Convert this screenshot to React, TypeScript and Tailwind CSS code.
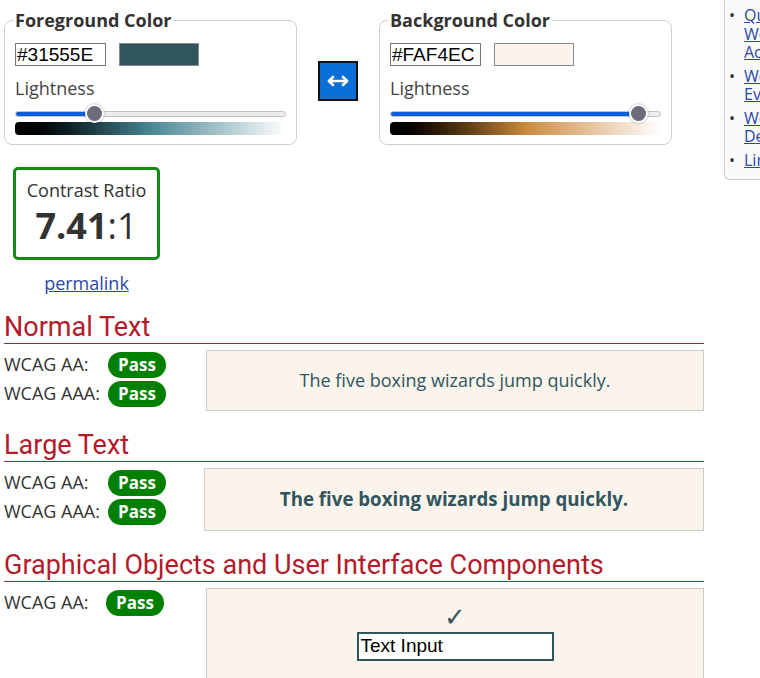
import React from "react";

const body = { fontFamily: '"Open Sans", "Noto Sans", sans-serif' };
const head = { fontFamily: 'Roboto, "Open Sans", sans-serif' };
const mono = { fontFamily: '"Liberation Sans", Arial, sans-serif' };

function Pass() {
  return (
    <span className="flex h-[26px] w-[58px] items-center justify-center rounded-full bg-[#008000] text-[17px] font-bold leading-none text-white">
      Pass
    </span>
  );
}

function ColorBox({
  title,
  hex,
  swatch,
  fill,
  thumb,
  gradient,
  className,
}: {
  title: string;
  hex: string;
  swatch: string;
  fill: string;
  thumb: string;
  gradient: string;
  className?: string;
}) {
  return (
    <fieldset className={"w-[293px] shrink-0 rounded-[8px] border border-[#cfcfcf] px-[10px] pb-[9px] " + className}>
      <legend className="-ml-[2px] px-[2px] text-[18px] font-bold leading-[23px] text-[#333]">{title}</legend>
      <div className="mt-[11px] flex gap-[13px]">
        <div
          style={mono}
          className="flex h-[23px] w-[91px] items-center border border-[#767676] bg-white px-[1px] text-[19px] leading-none text-black"
        >
          {hex}
        </div>
        <div className={"h-[23px] w-[80px] border border-[#8a8a8a] " + swatch} />
      </div>
      <div className="mt-[10px] text-[18px] leading-[24px] text-[#444]">Lightness</div>
      <div className="relative mt-[5px] flex h-[17px] items-center">
        <div className="flex h-[6px] w-full overflow-hidden rounded-full border border-[#c4c4c4] bg-[#ececf0]">
          <div className={"h-full bg-[#0a5fd8] " + fill} />
        </div>
        <div
          className={
            "absolute top-[-1px] h-[19px] w-[19px] rounded-full border-2 border-white bg-[#6b6b7d] shadow-[0_0_2px_rgba(0,0,0,0.4)] " +
            thumb
          }
        />
      </div>
      <div className={"h-[13px] w-full rounded-l-[4px] " + gradient} />
    </fieldset>
  );
}

function Section({
  title,
  children,
  sample,
  boxLeft,
  boxClass,
}: {
  title: string;
  children: React.ReactNode;
  sample: React.ReactNode;
  boxLeft: string;
  boxClass: string;
}) {
  return (
    <section>
      <h2 style={head} className="text-[27px] leading-[32px] text-[#b31b2b]">
        {title}
      </h2>
      <div className="h-px w-full bg-[#a8223c]" />
      <div className="mt-[6px] flex">
        <div className={"shrink-0 " + boxLeft}>{children}</div>
        <div className={"flex-1 border border-[#cccccc] bg-[#FAF4EC] text-[#31555E] " + boxClass}>{sample}</div>
      </div>
    </section>
  );
}

function Row({ label, pad }: { label: string; pad: string }) {
  return (
    <div className="flex h-[29px] items-center">
      <span className={"text-[18px] text-[#333] " + pad}>{label}</span>
      <Pass />
    </div>
  );
}

const links: string[][] = [
  ["Qu", "We", "Ac"],
  ["We", "Ev"],
  ["We", "De"],
  ["Lin"],
];

export default function App() {
  return (
    <div style={body} className="flex min-h-screen w-full overflow-hidden bg-white text-[#333]">
      <main className="w-[704px] shrink-0 pl-[4px]">
        {/* colour pickers */}
        <div className="flex items-start">
          <ColorBox
            title="Foreground Color"
            hex="#31555E"
            swatch="bg-[#31555E]"
            fill="w-[80px]"
            thumb="left-[70px]"
            gradient="bg-linear-to-r from-black via-[#4a8796] to-white"
            className="mt-[9px]"
          />
          <button className="ml-[21px] mt-[61px] flex h-[40px] w-[40px] shrink-0 items-center justify-center border-2 border-[#111] bg-[#0a6fd6]">
            <svg width="24" height="12" viewBox="0 0 24 12" fill="none" stroke="white" strokeWidth="2.6" strokeLinecap="round" strokeLinejoin="round">
              <path d="M3 6h18" />
              <path d="M7 2 3 6l4 4" />
              <path d="M17 2l4 4-4 4" />
            </svg>
          </button>
          <ColorBox
            title="Background Color"
            hex="#FAF4EC"
            swatch="bg-[#FAF4EC]"
            fill="w-[249px]"
            thumb="left-[239px]"
            gradient="bg-linear-to-r from-black via-[#cb8a3c] to-white"
            className="ml-[21px] mt-[9px]"
          />
        </div>

        {/* ratio */}
        <div className="ml-[9px] mt-[22px] w-[147px]">
          <div className="flex h-[93px] flex-col items-center rounded-[5px] border-[3px] border-[#168a16] pt-[9px]">
            <div className="text-[18px] leading-[22px] text-[#333]">Contrast Ratio</div>
            <div className="mt-[4px] text-[36px] leading-[42px] text-[#333]">
              <span className="font-bold">7.41</span>:1
            </div>
          </div>
          <div className="mt-[11px] text-center text-[18px] leading-[24px]">
            <a href="#" className="text-[#2a47a6] underline">
              permalink
            </a>
          </div>
        </div>

        <div className="mt-[16px]">
          <Section
            title="Normal Text"
            boxLeft="w-[202px]"
            boxClass="flex h-[61px] items-center justify-center text-[18px]"
            sample="The five boxing wizards jump quickly."
          >
            <Row label="WCAG AA:" pad="w-[104px]" />
            <Row label="WCAG AAA:" pad="w-[104px]" />
          </Section>
        </div>

        <div className="mt-[18px]">
          <Section
            title="Large Text"
            boxLeft="w-[200px]"
            boxClass="flex h-[63px] items-center justify-center text-[18.7px] font-bold"
            sample="The five boxing wizards jump quickly."
          >
            <Row label="WCAG AA:" pad="w-[104px]" />
            <Row label="WCAG AAA:" pad="w-[104px]" />
          </Section>
        </div>

        <div className="mt-[18px]">
          <Section
            title="Graphical Objects and User Interface Components"
            boxLeft="w-[202px]"
            boxClass="flex h-[110px] flex-col items-center pt-[15px]"
            sample={
              <>
                <span style={{ fontFamily: '"DejaVu Sans", sans-serif' }} className="text-[26px] leading-[27px] text-[#31555E]">
                  ✓
                </span>
                <div
                  style={mono}
                  className="mt-[1px] flex h-[29px] w-[197px] items-center border-2 border-[#31555E] bg-white px-[2px] text-[19px] text-black"
                >
                  Text Input
                </div>
              </>
            }
          >
            <Row label="WCAG AA:" pad="w-[102px]" />
          </Section>
        </div>
      </main>

      {/* related links, cut off by the window edge */}
      <aside className="ml-[20px] w-[36px] shrink-0 self-start overflow-hidden rounded-bl-[6px] border border-r-0 border-t-0 border-[#cccccc] bg-[#fafafa] pb-[10px] pl-[4px] pt-[6px]">
        <ul className="flex flex-col gap-[5px]">
          {links.map((lines, i) => (
            <li key={i} className="flex text-[16px] leading-[18.5px]">
              <span className="w-[15px] shrink-0 text-[#333]">•</span>
              <a href="#" className="whitespace-nowrap text-[#2a47a6] underline">
                {lines.map((l, j) => (
                  <span key={j} className="block">
                    {l}
                  </span>
                ))}
              </a>
            </li>
          ))}
        </ul>
      </aside>
    </div>
  );
}
